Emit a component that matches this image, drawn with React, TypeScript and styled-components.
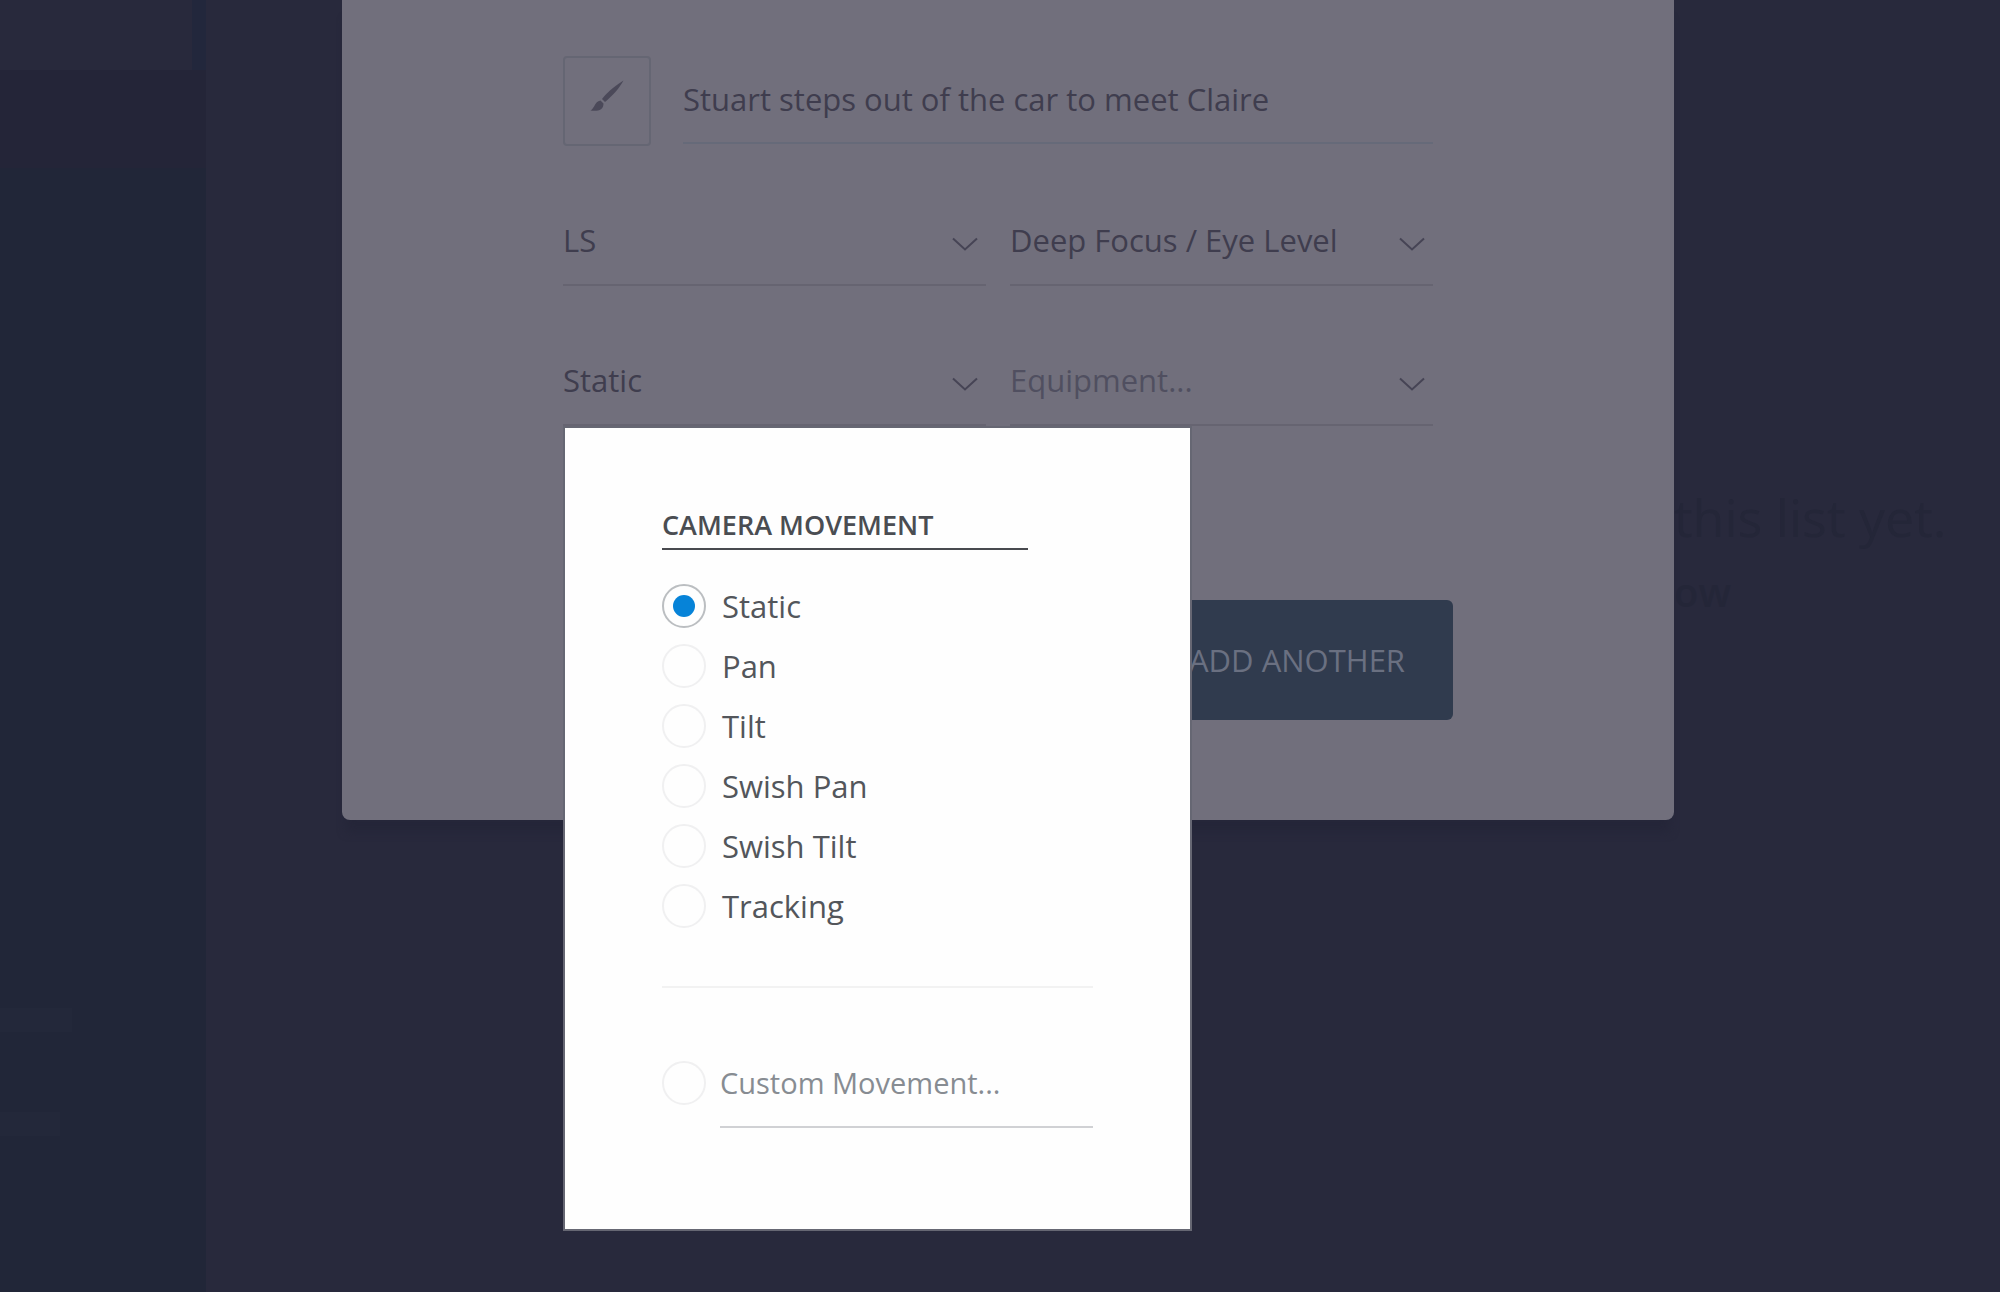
import { useState } from "react";
import type { ReactNode } from "react";
import styled, { createGlobalStyle } from "styled-components";

const GlobalStyle = createGlobalStyle`
  *, *::before, *::after { box-sizing: border-box; }
  body {
    margin: 0;
    background: #28293c;
    color: #3f3d4e;
    font-family: "Open Sans", "Noto Sans", sans-serif;
    font-size: 31px;
    line-height: 44px;
  }
  input, select, button { font: inherit; color: inherit; }
`;

const Page = styled.div`
  display: grid;
  grid-template-columns: 206px minmax(0, 1fr);
  min-height: 100vh;
  overflow: hidden;
`;

const Sidebar = styled.aside`
  display: flex;
  flex-direction: column;
  background: #212638;
`;

const SidebarHeader = styled.div`
  height: 70px;
  background: #28293c;
  border-right: 14px solid #22273c;
`;

const SidebarBand = styled.div`
  height: 98px;
  background: #242538;
`;

const SidebarFooter = styled.div`
  display: flex;
  flex-direction: column;
  gap: 80px;
  margin-top: auto;
  padding-bottom: 156px;
`;

const SidebarBar = styled.div<{ $width: number }>`
  width: ${(p) => p.$width}px;
  height: 24px;
  background: #23283a;
`;

const Main = styled.main`
  display: grid;
  grid-template-columns: minmax(0, 1332px) minmax(0, 1fr);
  align-items: start;
  padding-left: 136px;
`;

const Card = styled.form`
  position: relative;
  display: flex;
  flex-direction: column;
  padding: 56px 221px 100px;
  background: #716f7c;
  border-radius: 0 0 8px 8px;
  box-shadow: 0 16px 8px -4px #252639;
`;

const Fields = styled.div`
  display: flex;
  flex-direction: column;
  gap: 50px;
  padding-right: 20px;
`;

const ShotRow = styled.div`
  display: flex;
  align-items: flex-start;
  gap: 32px;
`;

const BrushButton = styled.button`
  display: grid;
  place-items: center;
  width: 88px;
  height: 90px;
  padding: 0 0 10px;
  background: none;
  border: 2px solid #656673;
  border-radius: 4px;
`;

const TextInput = styled.input<{ $light?: boolean }>`
  flex: 1;
  min-width: 0;
  height: ${(p) => (p.$light ? 90 : 88)}px;
  padding: 0;
  background: none;
  border: 0;
  border-bottom: 2px solid ${(p) => (p.$light ? "#d0d1d4" : "#666a79")};
  border-radius: 0;
  outline: none;
  font-size: ${(p) => (p.$light ? 29 : 31)}px;
  &::placeholder { color: #878c92; opacity: 1; }
`;

const SelectRow = styled.div`
  display: grid;
  grid-template-columns: 1fr 1fr;
  gap: 24px;
`;

const Field = styled.div`
  position: relative;
  display: grid;
`;

const Select = styled.select<{ $empty?: boolean }>`
  grid-area: 1 / 1;
  width: 100%;
  height: 90px;
  padding: 0;
  appearance: none;
  background: none;
  border: 0;
  border-bottom: 2px solid #666471;
  border-radius: 0;
  outline: none;
  color: ${(p) => (p.$empty ? "#504f60" : "#3f3d4e")};
`;

const Chevron = styled.svg`
  grid-area: 1 / 1;
  place-self: end;
  margin: 0 8px 34px 0;
  pointer-events: none;
`;

const Actions = styled.div`
  display: flex;
  justify-content: flex-end;
  margin-top: 174px;
`;

const AddButton = styled.button`
  height: 120px;
  padding: 0 48px;
  background: #303b4e;
  border: 0;
  border-radius: 6px;
  color: #6a7081;
`;

const Popover = styled.fieldset`
  position: absolute;
  top: 100%;
  left: 0;
  z-index: 1;
  display: flex;
  flex-direction: column;
  width: 629px;
  min-width: 0;
  margin: 0;
  padding: 78px 97px 101px;
  background: #fefefe;
  border: 2px solid #666773;
  color: #53565b;
`;

const PopoverTitle = styled.div`
  width: 85%;
  padding-bottom: 4px;
  border-bottom: 2px solid #484a4f;
  color: #4a4d52;
  font-size: 27px;
  font-weight: 600;
  line-height: 38px;
`;

const OptionList = styled.div`
  display: flex;
  flex-direction: column;
  gap: 16px;
  margin-top: 34px;
`;

const Option = styled.label`
  display: flex;
  align-items: center;
  gap: 16px;
`;

const Radio = styled.input`
  display: grid;
  place-items: center;
  flex: none;
  width: 44px;
  height: 44px;
  margin: 0;
  appearance: none;
  background: #fefefe;
  border: 2px solid #f0f0f1;
  border-radius: 50%;
  &:checked { border-color: #bbbec1; }
  &:checked::before {
    content: "";
    width: 22px;
    height: 22px;
    border-radius: 50%;
    background: #0683d8;
  }
`;

const Divider = styled.hr`
  width: 100%;
  height: 2px;
  margin: 58px 0 50px;
  background: #f2f2f2;
  border: 0;
`;

const CustomRow = styled.div`
  display: flex;
  align-items: center;
  gap: 14px;
`;

const EmptyNote = styled.div`
  padding-top: 482px;
  color: #242638;
  white-space: nowrap;
`;

const EmptyTitle = styled.p`
  margin: 0;
  font-size: 52px;
  line-height: 70px;
`;

const EmptyHint = styled.p`
  margin: 18px 0 0;
  font-size: 40px;
  font-weight: 600;
  line-height: 44px;
`;

const MOVEMENTS = ["Static", "Pan", "Tilt", "Swish Pan", "Swish Tilt", "Tracking"];

function BrushIcon() {
  return (
    <svg width="34" height="32" viewBox="0 0 34 32" fill="#4b4959" aria-hidden="true">
      <path d="M33.500 0.500 C28 4 18 11 12 19 L15 22 C22 16 29 9 33.500 0.500 Z" />
      <path d="M10.500 20.500 L13.500 23.500 C13.500 30 8 31.500 0.500 30.500 C5 28 4 22 10.500 20.500 Z" />
    </svg>
  );
}

interface SelectFieldProps {
  label: string;
  value: string;
  empty?: boolean;
  children?: ReactNode;
}

function SelectField({ label, value, empty, children }: SelectFieldProps) {
  return (
    <Field>
      <Select aria-label={label} $empty={empty}>
        <option>{value}</option>
      </Select>
      <Chevron width="26" height="15" viewBox="0 0 26 15" fill="none" stroke="#464455" strokeWidth="2">
        <path d="M1 1.500 L13 12.500 L25 1.500" />
      </Chevron>
      {children}
    </Field>
  );
}

export default function App() {
  const [movement, setMovement] = useState("Static");
  const [description, setDescription] = useState("Stuart steps out of the car to meet Claire");

  return (
    <>
      <GlobalStyle />
      <Page>
        <Sidebar>
          <SidebarHeader />
          <SidebarBand />
          <SidebarFooter>
            <SidebarBar $width={72} />
            <SidebarBar $width={60} />
          </SidebarFooter>
        </Sidebar>
        <Main>
          <Card onSubmit={(e) => e.preventDefault()}>
            <Fields>
              <ShotRow>
                <BrushButton type="button" aria-label="Draw">
                  <BrushIcon />
                </BrushButton>
                <TextInput
                  aria-label="Description"
                  value={description}
                  onChange={(e) => setDescription(e.target.value)}
                />
              </ShotRow>
              <SelectRow>
                <SelectField label="Shot size" value="LS" />
                <SelectField label="Focus and angle" value="Deep Focus / Eye Level" />
              </SelectRow>
              <SelectRow>
                <SelectField label="Movement" value={movement}>
                  <Popover aria-labelledby="movement-title">
                    <PopoverTitle id="movement-title">CAMERA MOVEMENT</PopoverTitle>
                    <OptionList>
                      {MOVEMENTS.map((name) => (
                        <Option key={name}>
                          <Radio
                            type="radio"
                            name="movement"
                            checked={movement === name}
                            onChange={() => setMovement(name)}
                          />
                          {name}
                        </Option>
                      ))}
                    </OptionList>
                    <Divider />
                    <CustomRow>
                      <Radio
                        type="radio"
                        name="movement"
                        aria-label="Custom movement"
                        checked={movement === "Custom"}
                        onChange={() => setMovement("Custom")}
                      />
                      <TextInput $light aria-label="Custom movement name" placeholder="Custom Movement..." />
                    </CustomRow>
                  </Popover>
                </SelectField>
                <SelectField label="Equipment" value="Equipment..." empty />
              </SelectRow>
            </Fields>
            <Actions>
              <AddButton type="submit">ADD ANOTHER</AddButton>
            </Actions>
          </Card>
          <EmptyNote>
            <EmptyTitle>this list yet.</EmptyTitle>
            <EmptyHint>ow</EmptyHint>
          </EmptyNote>
        </Main>
      </Page>
    </>
  );
}
